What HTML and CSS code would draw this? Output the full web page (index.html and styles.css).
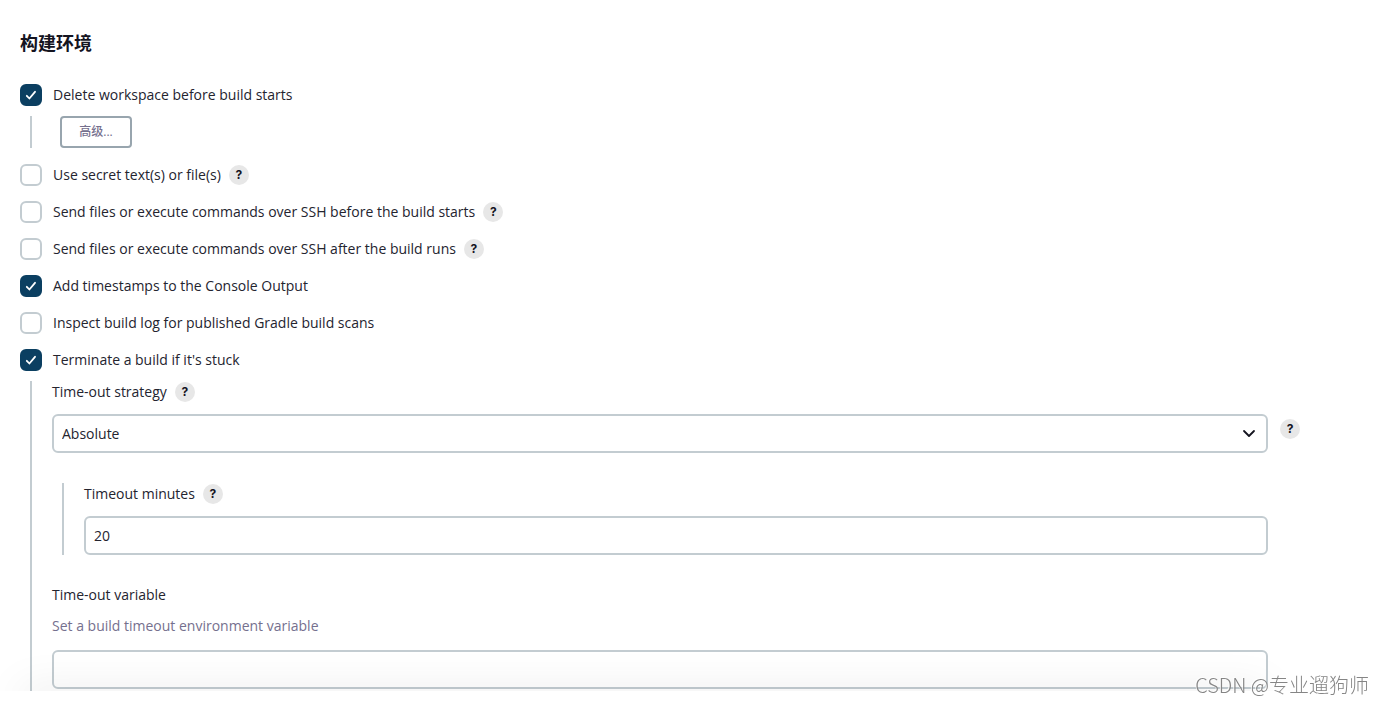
FILE: index.html
```html
<!DOCTYPE html>
<html lang="zh-CN">
<head>
    <meta charset="UTF-8">
    <meta name="viewport" content="width=device-width, initial-scale=1.0">
    <title>构建环境</title>
    <link rel="stylesheet" href="styles.css">
</head>
<body>
    <svg width="0" height="0" class="sprite" aria-hidden="true">
        <symbol id="tick" viewBox="0 0 22 22">
            <path d="M6.8 11.8l2.6 2.7 5.6-6.7" fill="none" stroke="#fff" stroke-width="1.8" stroke-linecap="round" stroke-linejoin="round"/>
        </symbol>
    </svg>

    <form class="config">
        <h2>构建环境</h2>

        <div class="option">
            <span class="check"><input type="checkbox" id="cleanup" checked><svg><use href="#tick"/></svg></span>
            <label for="cleanup">Delete workspace before build starts</label>
        </div>
        <div class="nested nested-button">
            <button type="button" class="advanced">高级...</button>
        </div>

        <div class="option">
            <span class="check"><input type="checkbox" id="secrets"></span>
            <label for="secrets">Use secret text(s) or file(s)</label>
            <button type="button" class="help">?</button>
        </div>
        <div class="option">
            <span class="check"><input type="checkbox" id="ssh-before"></span>
            <label for="ssh-before">Send files or execute commands over SSH before the build starts</label>
            <button type="button" class="help">?</button>
        </div>
        <div class="option">
            <span class="check"><input type="checkbox" id="ssh-after"></span>
            <label for="ssh-after">Send files or execute commands over SSH after the build runs</label>
            <button type="button" class="help">?</button>
        </div>
        <div class="option">
            <span class="check"><input type="checkbox" id="timestamps" checked><svg><use href="#tick"/></svg></span>
            <label for="timestamps">Add timestamps to the Console Output</label>
        </div>
        <div class="option">
            <span class="check"><input type="checkbox" id="gradle"></span>
            <label for="gradle">Inspect build log for published Gradle build scans</label>
        </div>
        <div class="option">
            <span class="check"><input type="checkbox" id="timeout" checked><svg><use href="#tick"/></svg></span>
            <label for="timeout">Terminate a build if it's stuck</label>
        </div>

        <div class="nested nested-fields">
            <div class="field-label">
                <label for="strategy">Time-out strategy</label>
                <button type="button" class="help">?</button>
            </div>
            <div class="field-row">
                <div class="select">
                    <select id="strategy">
                        <option>Absolute</option>
                    </select>
                    <svg width="14" height="10" viewBox="0 0 14 10"><path d="M2 2l5 5 5-5" fill="none" stroke="#14141f" stroke-width="1.8" stroke-linecap="round" stroke-linejoin="round"/></svg>
                </div>
                <button type="button" class="help">?</button>
            </div>

            <div class="subfields">
                <div class="field-label">
                    <label for="minutes">Timeout minutes</label>
                    <button type="button" class="help">?</button>
                </div>
                <input type="text" id="minutes" class="text" value="20">
            </div>

            <div class="field-label">
                <label for="variable">Time-out variable</label>
            </div>
            <p class="description">Set a build timeout environment variable</p>
            <input type="text" id="variable" class="text">
        </div>
    </form>

    <div class="bottom-bar"></div>
    <div class="watermark">CSDN @专业遛狗师</div>
</body>
</html>
```
FILE: styles.css
```css
* {
    box-sizing: border-box;
}
body {
    margin: 0;
    background-color: #fff;
    color: #24242f;
    font-family: "Open Sans", "Noto Sans CJK SC", sans-serif;
    font-size: 14px;
    line-height: 22px;
}
button, input, select {
    font: inherit;
    color: inherit;
    margin: 0;
}
.sprite {
    position: absolute;
}
.config {
    display: flex;
    flex-direction: column;
    min-height: 100vh;
    padding: 30px 116px 0 20px;
}
h2 {
    margin: 0 0 28px;
    color: #14141f;
    font-size: 18px;
    line-height: 26px;
    font-weight: bold;
}
.option {
    display: flex;
    align-items: center;
    margin-bottom: 15px;
}
.option label {
    margin-left: 11px;
}
.check {
    display: grid;
    width: 22px;
    height: 22px;
}
.check input,
.check svg {
    grid-area: 1 / 1;
    width: 22px;
    height: 22px;
}
.check svg {
    pointer-events: none;
}
.check input {
    appearance: none;
    border: 2px solid #c3ccd1;
    border-radius: 6px;
    background-color: #fff;
}
.check input:checked {
    border-color: #0b3f61;
    background-color: #0b3f61;
}
.help {
    flex: none;
    width: 20px;
    height: 20px;
    margin-left: 8px;
    padding: 0;
    border: none;
    border-radius: 50%;
    background-color: #e7e7e7;
    color: #14141f;
    font-family: Inter, sans-serif;
    font-size: 12px;
    font-weight: bold;
    line-height: 20px;
    text-align: center;
}
/* settings that belong to the option above */
.nested {
    margin: -5px 0 16px 10px;
    border-left: 2px solid #c3ccd1;
}
.nested-button {
    display: flex;
    padding-left: 28px;
}
.nested-fields {
    flex: 1;
    margin-bottom: 0;
    padding-left: 20px;
}
.advanced {
    width: 72px;
    height: 32px;
    padding: 0;
    border: 2px solid #98a5ae;
    border-radius: 4px;
    background-color: #fff;
    color: #75708e;
    font-size: 12px;
    font-weight: 500;
    line-height: 28px;
}
.field-label {
    display: flex;
    align-items: center;
    height: 22px;
    margin-bottom: 11px;
}
.field-row {
    display: flex;
    margin-right: -32px;
}
.field-row .help {
    margin: 5px 0 0 12px;
}
.select {
    position: relative;
    flex: 1;
}
.select svg {
    position: absolute;
    top: 15px;
    right: 12px;
    pointer-events: none;
}
.select select,
.text {
    display: block;
    width: 100%;
    height: 39px;
    padding: 0 8px;
    border: 2px solid #c3ccd1;
    border-radius: 6px;
    background-color: #fff;
    appearance: none;
}
.subfields {
    margin: 30px 0 29px 10px;
    padding-left: 20px;
    border-left: 2px solid #c3ccd1;
}
.description {
    margin: -2px 0 13px;
    color: #75708e;
}
.bottom-bar {
    position: fixed;
    right: 0;
    bottom: 0;
    left: 0;
    z-index: 1;
    height: 14px;
}
.bottom-bar::before,
.bottom-bar::after {
    content: "";
    position: absolute;
    inset: 0;
}
.bottom-bar::before {
    right: 116px;
    left: 20px;
    box-shadow: 0 0 40px rgba(0, 0, 0, 0.13);
}
.bottom-bar::after {
    background-color: #fff;
}
.watermark {
    position: fixed;
    right: 15px;
    bottom: 6px;
    z-index: 2;
    color: #858585;
    font-family: "Noto Sans CJK SC", sans-serif;
    font-size: 20px;
    font-weight: 300;
    line-height: 28px;
    text-shadow: -1px -1px 0 rgba(255, 255, 255, 0.8);
}
```
